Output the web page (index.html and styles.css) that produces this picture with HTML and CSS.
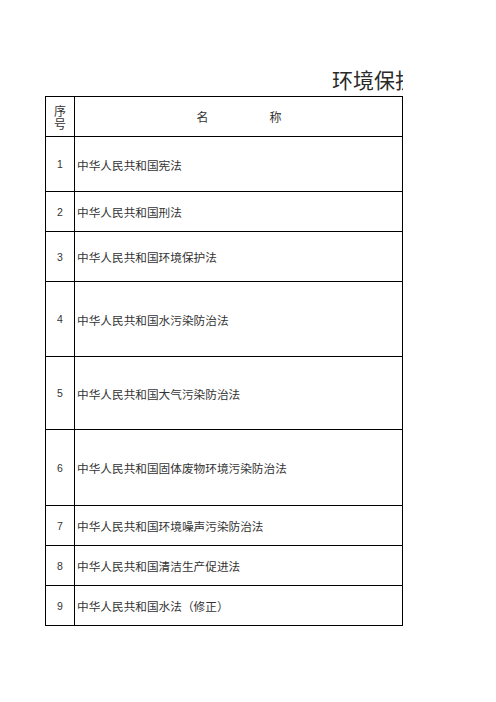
FILE: index.html
```html
<!DOCTYPE html>
<html lang="zh-CN">
<head>
<meta charset="utf-8">
<title>环境保护法律法规清单</title>
<link rel="stylesheet" href="styles.css">
</head>
<body>
<div class="page">
  <div class="title-box"><h1 class="title">环境保护法律法规清单</h1></div>
  <div class="sheet">
    <div class="cell head-no"><span class="hl">序</span><span class="hl">号</span></div>
    <div class="cell head-name"><span>名</span><span>称</span></div>

    <div class="cell no">1</div><div class="cell name">中华人民共和国宪法</div>
    <div class="cell no">2</div><div class="cell name">中华人民共和国刑法</div>
    <div class="cell no">3</div><div class="cell name">中华人民共和国环境保护法</div>
    <div class="cell no">4</div><div class="cell name">中华人民共和国水污染防治法</div>
    <div class="cell no">5</div><div class="cell name">中华人民共和国大气污染防治法</div>
    <div class="cell no">6</div><div class="cell name">中华人民共和国固体废物环境污染防治法</div>
    <div class="cell no">7</div><div class="cell name">中华人民共和国环境噪声污染防治法</div>
    <div class="cell no">8</div><div class="cell name">中华人民共和国清洁生产促进法</div>
    <div class="cell no">9</div><div class="cell name">中华人民共和国水法（修正）</div>
  </div>
</div>
</body>
</html>
```
FILE: styles.css
```css
html, body {
  margin: 0;
  padding: 0;
  background: #ffffff;
}

.page {
  padding: 69px 0 0 45px;
  font-family: "Noto Sans CJK SC", "Noto Sans", sans-serif;
  color: #333333;
}

.title-box {
  width: 358px;
  overflow: hidden;
  height: 27px;
}

.title {
  margin: 0;
  padding-left: 287px;
  white-space: nowrap;
  font-size: 21px;
  line-height: 21px;
  font-weight: 400;
  color: #2a2a2a;
}

.sheet {
  display: grid;
  grid-template-columns: 28px 327px;
  grid-template-rows: 39px 54px 39px 49px 74px 72px 75px 39px 39px 39px;
  gap: 1px;
  padding: 1px;
  width: 356px;
  background: #000000;
}

.cell {
  background: #ffffff;
  display: flex;
  align-items: center;
  font-size: 11.67px;
  line-height: 13px;
}

.head-no {
  flex-direction: column;
  justify-content: center;
  font-size: 12px;
}

.hl {
  display: block;
  height: 13px;
  line-height: 13px;
}

.head-name {
  justify-content: center;
  gap: 61px;
  font-size: 12px;
  padding-left: 1px;
}

.no {
  justify-content: center;
  font-family: "Liberation Sans", Arial, sans-serif;
  font-size: 10.5px;
  padding-top: 1px;
}

.name {
  padding-left: 2px;
  white-space: nowrap;
}
```
